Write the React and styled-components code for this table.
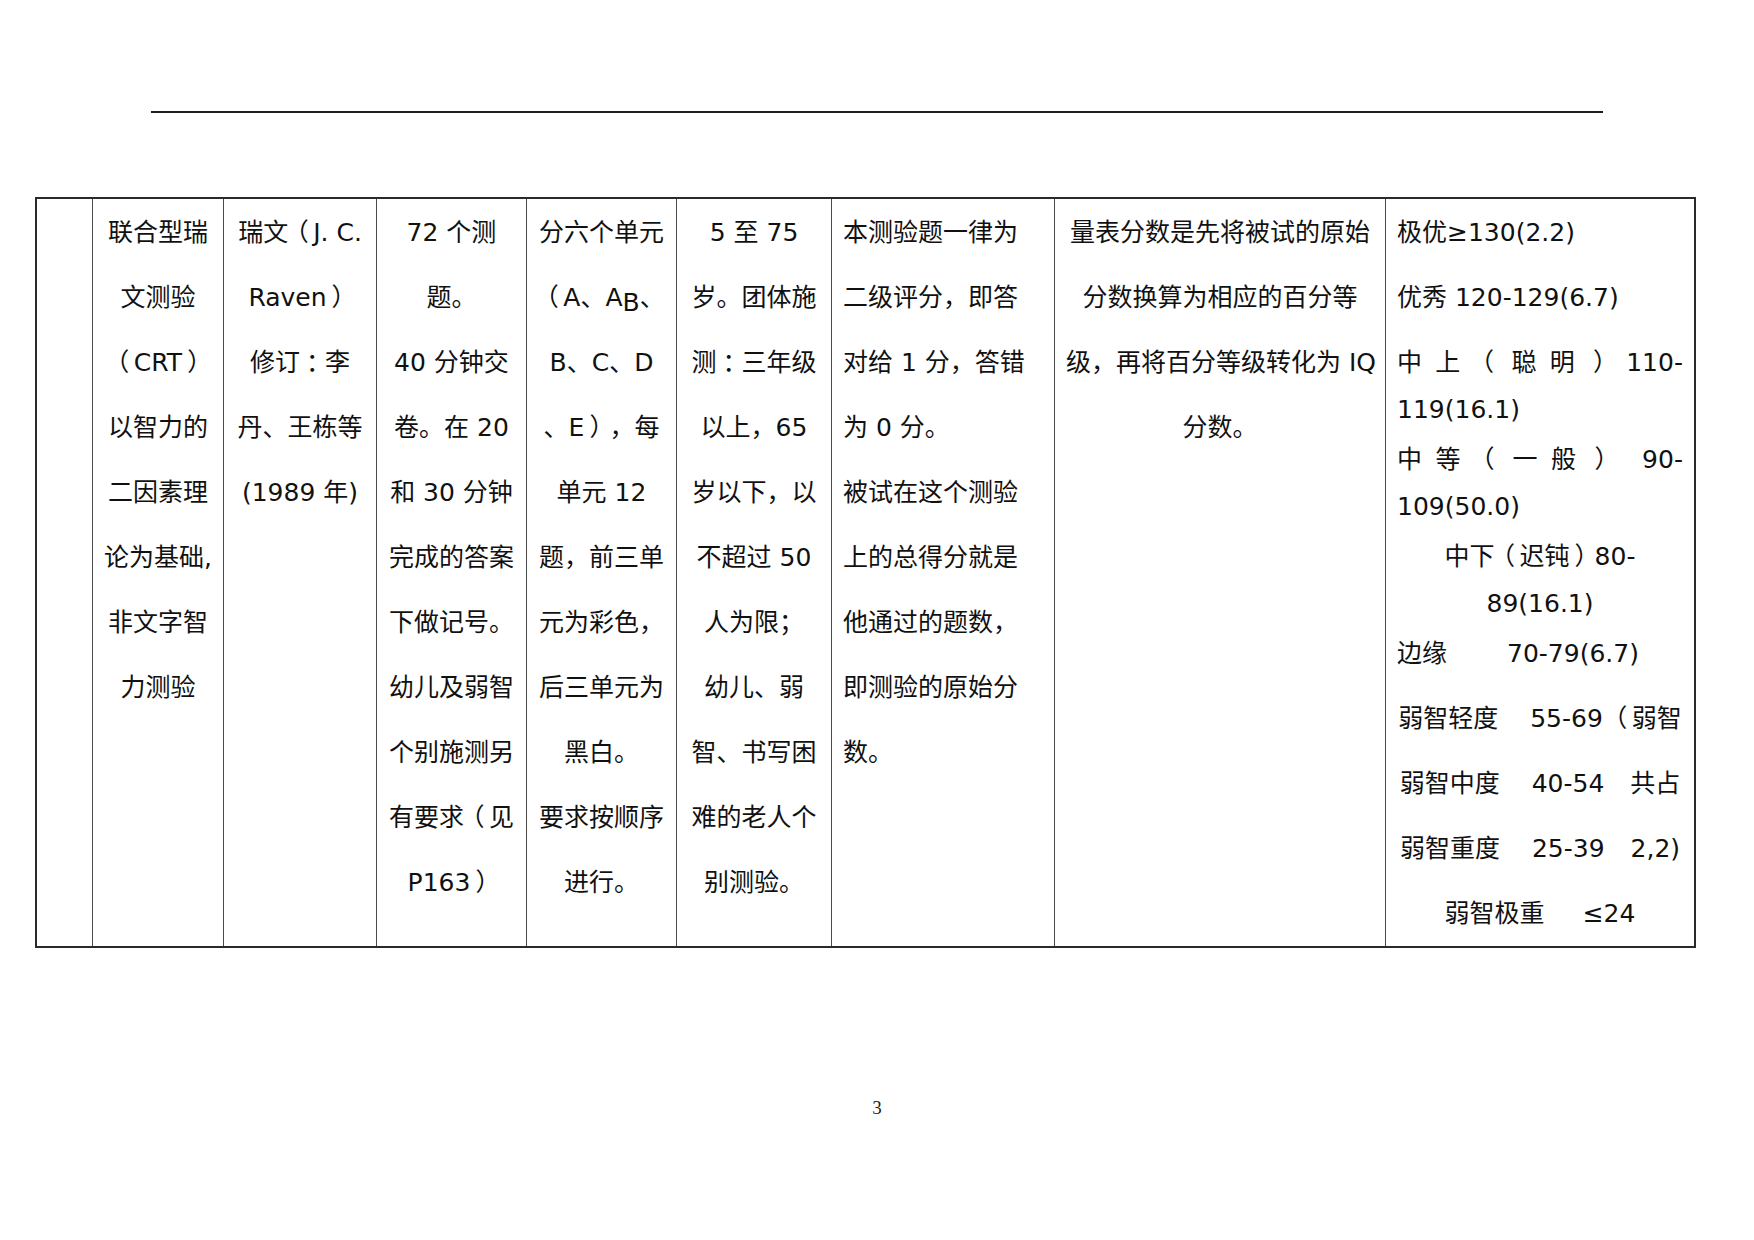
import React from "react";
import styled, { createGlobalStyle } from "styled-components";

const GlobalStyle = createGlobalStyle`
  html, body { margin: 0; padding: 0; background: #ffffff; }
  body { font-family: "DejaVu Sans", "Noto Sans CJK SC", sans-serif; color: #111; }
`;

const Page = styled.div`
  width: 1754px;
  height: 1240px;
  box-sizing: border-box;
  padding: 111px 0 0 35px;
  display: flex;
  flex-direction: column;
  align-items: flex-start;
  background: #fff;
`;

const HeaderRule = styled.div`
  width: 1452px;
  height: 2px;
  margin-left: 116px;
  background: #1e1e1e;
`;

const Table = styled.div`
  margin-top: 84px;
  display: grid;
  grid-template-columns: 56px 131px 153px 150px 150px 155px 223px 331px 308px;
  border: 2px solid #2a2a2a;
  font-family: "DejaVu Sans", "Noto Sans CJK SC", sans-serif;
  font-size: 25px;
  color: #111;
  text-spacing-trim: space-all;
`;

const Cell = styled.div`
  box-sizing: border-box;
  padding: 1px 11px 0;
  border-right: ${(p) => (p.$last ? "none" : "1px solid #4a4a4a")};
  text-align: ${(p) => p.$align || "center"};
  min-width: 0;
`;

const Line = styled.div`
  height: 65px;
  line-height: 65px;
  white-space: nowrap;
`;

const Para = styled.div`
  margin-top: ${(p) => p.$mt || 0}px;
  line-height: ${(p) => p.$lh || 65}px;
  text-align: ${(p) => p.$align || "left"};
  white-space: nowrap;
`;

const Spread = styled.div`
  display: flex;
  justify-content: space-between;
  line-height: ${(p) => p.$lh || 47}px;
  white-space: nowrap;
`;

const Spacer = styled.span`
  display: inline-block;
  width: ${(p) => p.$w}px;
`;

const Sub = styled.span`
  vertical-align: -5px;
`;

/* full-width punctuation drawn centred in its em box, as in the source document:
   the glyph is set half-width and padded back to a full em */
const Punct = styled.span`
  font-feature-settings: "halt" 1;
  padding-left: ${(p) => p.$pl}px;
  padding-right: ${(p) => p.$pr}px;
`;

const PageNumber = styled.div`
  align-self: stretch;
  margin: 149px 35px 0 0;
  text-align: center;
  font-family: "Liberation Serif", "DejaVu Serif", serif;
  font-size: 19px;
  line-height: 22px;
  color: #222;
`;

const PADS = { "（": [8, 4.5], "）": [5, 7.5], "：": [6, 6.5] };

const fw = (text) => {
  if (typeof text !== "string") return text;
  const parts = [];
  let buf = "";
  [...text].forEach((ch, i) => {
    if (PADS[ch]) {
      if (buf) parts.push(buf);
      buf = "";
      parts.push(
        <Punct key={i} $pl={PADS[ch][0]} $pr={PADS[ch][1]}>
          {ch}
        </Punct>
      );
    } else {
      buf += ch;
    }
  });
  if (buf) parts.push(buf);
  return parts;
};

const col2 = ["联合型瑞", "文测验", "（CRT）", "以智力的", "二因素理", "论为基础,", "非文字智", "力测验"];
const col3 = ["瑞文（J. C.", "Raven）", "修订：李", "丹、王栋等", "(1989 年)"];
const col4 = [
  "72 个测",
  "题。",
  "40 分钟交",
  "卷。在 20",
  "和 30 分钟",
  "完成的答案",
  "下做记号。",
  "幼儿及弱智",
  "个别施测另",
  "有要求（见",
  "P163）",
];
const col5 = [
  "分六个单元",
  <>
    {fw("（")}A、A<Sub>B</Sub>、
  </>,
  "B、C、D",
  "、E），每",
  "单元 12",
  "题，前三单",
  "元为彩色，",
  "后三单元为",
  "黑白。",
  "要求按顺序",
  "进行。",
];
const col6 = [
  "5 至 75",
  "岁。团体施",
  "测：三年级",
  "以上，65",
  "岁以下，以",
  "不超过 50",
  "人为限；",
  "幼儿、弱",
  "智、书写困",
  "难的老人个",
  "别测验。",
];
const col7 = [
  "本测验题一律为",
  "二级评分，即答",
  "对给 1 分，答错",
  "为 0 分。",
  "被试在这个测验",
  "上的总得分就是",
  "他通过的题数，",
  "即测验的原始分",
  "数。",
];
const col8 = ["量表分数是先将被试的原始", "分数换算为相应的百分等", "级，再将百分等级转化为 IQ", "分数。"];

const Lines = ({ items }) => items.map((t, i) => <Line key={i}>{fw(t)}</Line>);

export default function App() {
  return (
    <>
      <GlobalStyle />
      <Page>
        <HeaderRule />
        <Table>
          <Cell />
          <Cell>
            <Lines items={col2} />
          </Cell>
          <Cell>
            <Lines items={col3} />
          </Cell>
          <Cell>
            <Lines items={col4} />
          </Cell>
          <Cell>
            <Lines items={col5} />
          </Cell>
          <Cell>
            <Lines items={col6} />
          </Cell>
          <Cell $align="left">
            <Lines items={col7} />
          </Cell>
          <Cell>
            <Lines items={col8} />
          </Cell>
          <Cell $last $align="left">
            <Para>极优≥130(2.2)</Para>
            <Para>优秀 120-129(6.7)</Para>
            <Para $mt={9} $lh={47}>
              <Spread>
                <span>中</span>
                <span>上</span>
                <span>{fw("（")}</span>
                <span>聪</span>
                <span>明</span>
                <span>{fw("）")}</span>
                <span>110-</span>
              </Spread>
              <div>119(16.1)</div>
            </Para>
            <Para $mt={3} $lh={47}>
              <Spread>
                <span>中</span>
                <span>等</span>
                <span>{fw("（")}</span>
                <span>一</span>
                <span>般</span>
                <span>{fw("）")}</span>
                <span>
                  <Spacer $w={14} />
                  90-
                </span>
              </Spread>
              <div>109(50.0)</div>
            </Para>
            <Para $mt={3} $lh={47} $align="center">
              <div>{fw("中下（迟钝）80-")}</div>
              <div>89(16.1)</div>
            </Para>
            <Para $mt={3} $lh={47}>
              边缘
              <Spacer $w={60} />
              70-79(6.7)
            </Para>
            <Para $mt={9} $align="center">
              弱智轻度
              <Spacer $w={32} />
              55-69
              <Spacer $w={4} />
              {fw("（弱智")}
            </Para>
            <Para $align="center">
              弱智中度
              <Spacer $w={32} />
              40-54
              <Spacer $w={26} />
              共占
            </Para>
            <Para $align="center">
              弱智重度
              <Spacer $w={32} />
              25-39
              <Spacer $w={26} />
              2,2)
            </Para>
            <Para $align="center">
              弱智极重
              <Spacer $w={38} />
              ≤24
            </Para>
          </Cell>
        </Table>
        <PageNumber>3</PageNumber>
      </Page>
    </>
  );
}
